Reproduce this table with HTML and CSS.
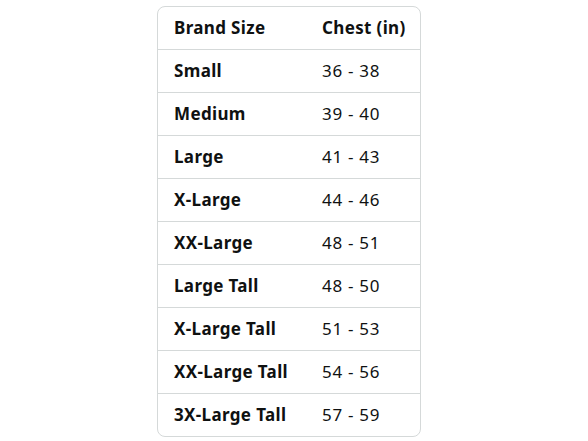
FILE: index.html
```html
<!DOCTYPE html>
<html>
<head>
<meta charset="utf-8">
<link rel="stylesheet" href="styles.css">
</head>
<body>
<div class="page">
  <div class="card">
    <table class="sizes">
      <colgroup><col class="c1"><col class="c2"></colgroup>
      <thead>
        <tr><th>Brand Size</th><th>Chest (in)</th></tr>
      </thead>
      <tbody>
        <tr><th>Small</th><td>36 - 38</td></tr>
        <tr><th>Medium</th><td>39 - 40</td></tr>
        <tr><th>Large</th><td>41 - 43</td></tr>
        <tr><th>X-Large</th><td>44 - 46</td></tr>
        <tr><th>XX-Large</th><td>48 - 51</td></tr>
        <tr><th>Large Tall</th><td>48 - 50</td></tr>
        <tr><th>X-Large Tall</th><td>51 - 53</td></tr>
        <tr><th>XX-Large Tall</th><td>54 - 56</td></tr>
        <tr><th>3X-Large Tall</th><td>57 - 59</td></tr>
      </tbody>
    </table>
  </div>
</div>
</body>
</html>
```

FILE: styles.css
```css
html, body {
  margin: 0;
  padding: 0;
  background: #ffffff;
}
.page {
  padding: 6px 0 0 157px;
}
.card {
  width: 262px;
  border: 1px solid #d5d9d9;
  border-radius: 8px;
  overflow: hidden;
}
.sizes {
  width: 100%;
  table-layout: fixed;
  border-collapse: collapse;
  font-family: "Noto Sans", "Open Sans", sans-serif;
  font-size: 17px;
  color: #0f1111;
}
.c1 { width: 148px; }
.c2 { width: 114px; }
.sizes th, .sizes td {
  height: 42px;
  padding: 0 0 0 16px;
  text-align: left;
  vertical-align: middle;
  border-top: 1px solid #d5d9d9;
  line-height: 20px;
  white-space: nowrap;
}
.sizes thead th {
  border-top: none;
}
.sizes th {
  font-weight: 700;
  letter-spacing: 0.35px;
}
.sizes td {
  font-weight: 400;
  letter-spacing: 0.7px;
}
```
